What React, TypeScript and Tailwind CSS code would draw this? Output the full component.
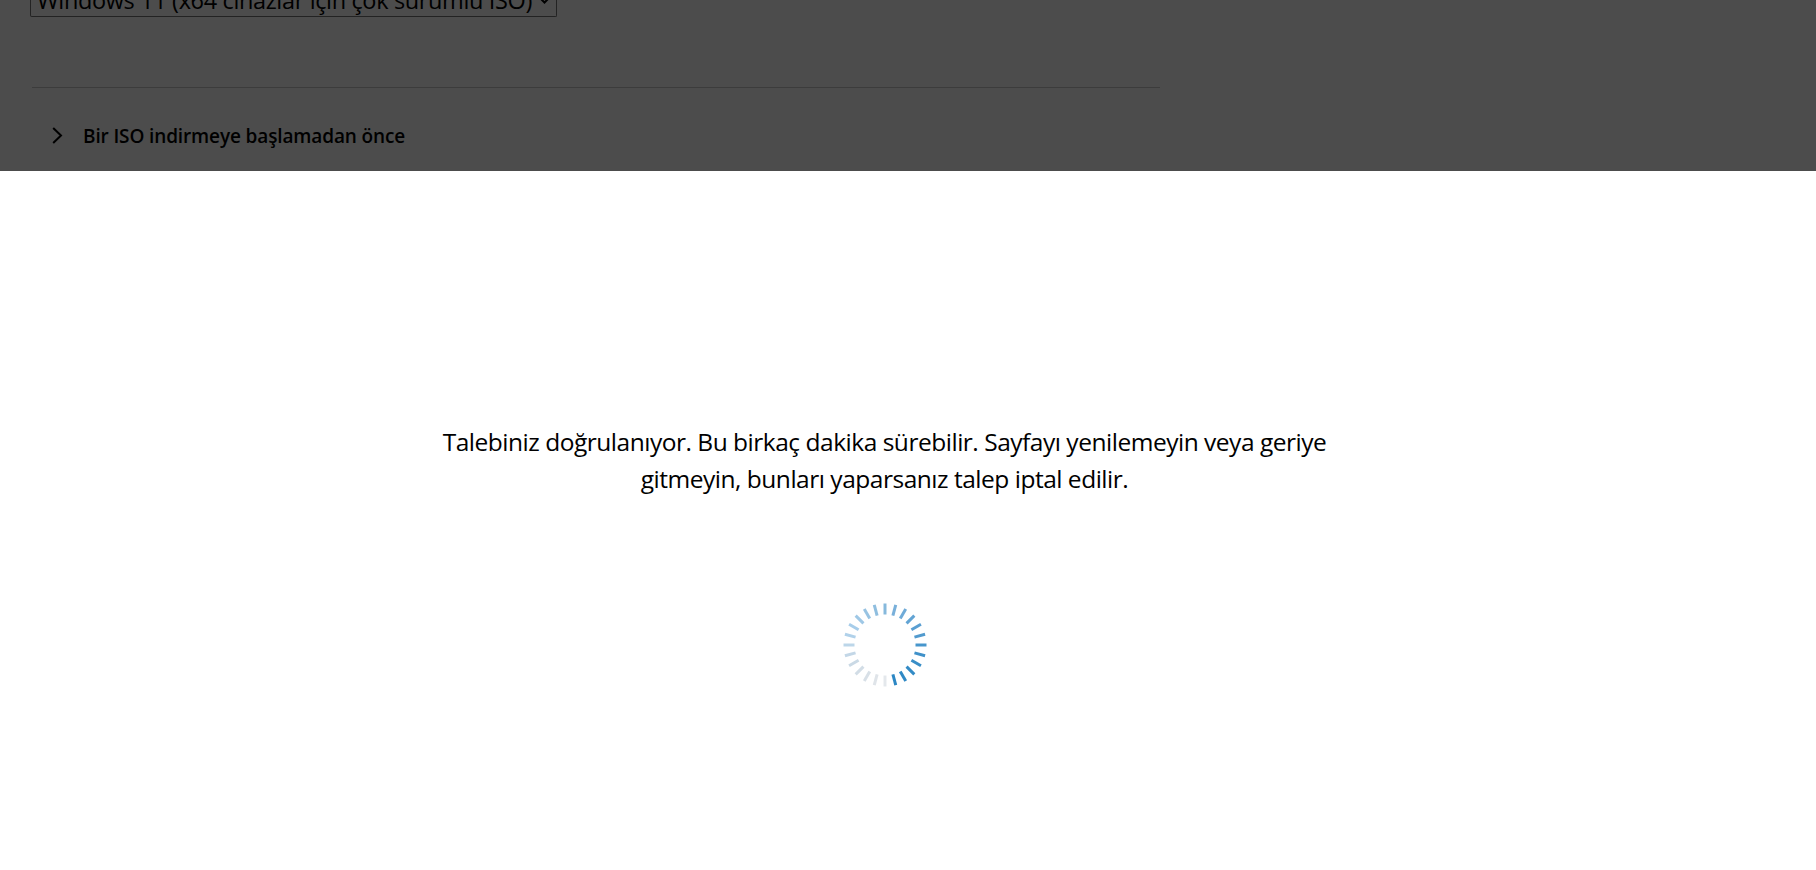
const TICKS = [
  "#86b9dc", "#79b0da", "#6fabd8", "#62a4d4", "#5a9fd2", "#519ace", "#4796cc", "#3f91c9",
  "#398ec7", "#338bc6", "#2f89c5", "#2c87c4", "#e4e8ec", "#dfe4e9", "#d8e0e7", "#d2dde6",
  "#cad9e5", "#c3d7e7", "#bcd6e9", "#b0d1ea", "#a7cdea", "#9fc8e6", "#98c3e2", "#8fbedf",
]

function Spinner() {
  return (
    <svg className="block h-[86px] w-[86px]" viewBox="-43 -43 86 86" aria-label="Yükleniyor">
      {TICKS.map((color, i) => (
        <line
          key={i}
          x1="0"
          y1="-30.5"
          x2="0"
          y2="-41.5"
          stroke={color}
          strokeWidth="3"
          transform={`rotate(${i * 15})`}
        />
      ))}
    </svg>
  )
}

function DownloadPage() {
  return (
    <div className="h-[171px] shrink-0 overflow-hidden bg-[#4c4c4c] text-black">
      <div className="ml-[30px] flex h-[17px] w-[527px] items-end overflow-hidden rounded-b-[2px] border border-t-0 border-[#232323]">
        <div className="flex h-[31px] w-full shrink-0 items-center justify-between pr-[7px] pl-[6px]">
          <span className="text-[23.5px] leading-[31px] tracking-[-0.36px] whitespace-nowrap">
            Windows 11 (x64 cihazlar için çok sürümlü ISO)
          </span>
          <svg className="h-[6px] w-[9px] shrink-0" viewBox="0 0 9 6" fill="none" stroke="black" strokeWidth="2">
            <path d="M1 1l3.5 3.5L8 1" />
          </svg>
        </div>
      </div>
      <div className="mt-[70px] ml-8 h-px w-[1128px] bg-[#3c3c3c]" />
      <div className="flex h-[96px] items-center pl-[52px]">
        <svg className="mb-px h-[17px] w-[11px]" viewBox="0 0 11 17" fill="none" stroke="black" strokeWidth="2">
          <path d="M1.2 1l7.8 7.5L1.2 16" />
        </svg>
        <span className="ml-[20px] text-[19px] font-semibold tracking-[-0.13px] whitespace-nowrap">
          Bir ISO indirmeye başlamadan önce
        </span>
      </div>
    </div>
  )
}

export default function App() {
  return (
    <div className="flex h-[870px] w-[1816px] flex-col overflow-hidden bg-white font-['Open_Sans','Noto_Sans',sans-serif]">
      <DownloadPage />
      <div className="flex w-[1769px] flex-col items-center pt-[252px]">
        <p className="text-center text-[24.5px] leading-[37px] tracking-[-0.48px] whitespace-nowrap text-black">
          Talebiniz doğrulanıyor. Bu birkaç dakika sürebilir. Sayfayı yenilemeyin veya geriye
          <br />
          gitmeyin, bunları yaparsanız talep iptal edilir.
        </p>
        <div className="mt-[105px]">
          <Spinner />
        </div>
      </div>
    </div>
  )
}
